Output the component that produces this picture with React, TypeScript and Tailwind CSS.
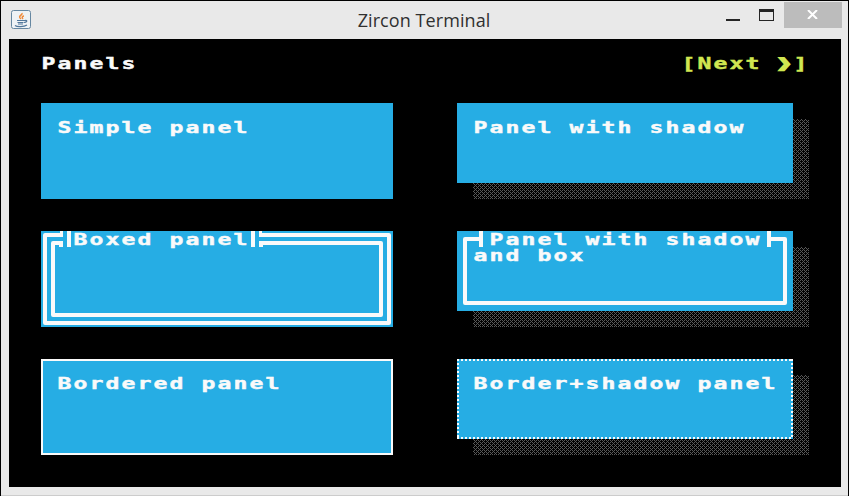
import React from "react";

function Text({ children, className = "" }: { children: React.ReactNode; className?: string }) {
  return (
    <span
      className={
        "block h-4 w-max origin-left translate-x-[0.4px] translate-y-px scale-x-[1.4] whitespace-pre font-['DejaVu_Sans_Mono',monospace] text-[16.5px] font-bold leading-4 tracking-[1.495px] [-webkit-text-stroke:0.45px_currentColor] " +
        className
      }
    >
      {children}
    </span>
  );
}

function Shadowed({ children }: { children: React.ReactNode }) {
  return (
    <div className="relative h-24 w-[352px]">
      <svg className="absolute left-4 top-4" width="336" height="80" shapeRendering="crispEdges">
        <defs>
          <pattern id="shade" width="4" height="4" patternUnits="userSpaceOnUse">
            <path
              d="M0 0h1v1h-1zM1 1h1v1h-1zM3 1h1v1h-1zM2 2h1v1h-1zM1 3h1v1h-1zM3 3h1v1h-1z"
              fill="#585858"
            />
          </pattern>
        </defs>
        <rect width="336" height="80" fill="url(#shade)" />
      </svg>
      <div className="relative h-20 w-[336px] bg-[#26ade4]">{children}</div>
    </div>
  );
}

function DottedBorder() {
  const h = "absolute left-0 right-0 h-[2px] bg-[repeating-linear-gradient(90deg,#fafafa_0_2px,transparent_2px_4px)]";
  const v = "absolute top-0 bottom-0 w-[2px] bg-[repeating-linear-gradient(180deg,#fafafa_0_2px,transparent_2px_4px)]";
  return (
    <>
      <i className={h + " top-0"} />
      <i className={h + " bottom-0"} />
      <i className={v + " left-0"} />
      <i className={v + " right-0"} />
    </>
  );
}

export default function App() {
  return (
    <div className="flex h-[496px] w-[849px] flex-col overflow-hidden border-l border-t border-r border-black bg-[#e9e9e9] pl-2 pr-[7px] text-[#fafafa]">
      <header className="relative flex h-[38px] shrink-0 items-start">
        <svg className="ml-[2px] mt-[9px]" width="20" height="19" viewBox="0 0 20 19" fill="none">
          <rect x=".5" y=".5" width="19" height="18" rx="2" fill="#eef2f5" stroke="#6687a1" />
          <path d="M10 9C6 6 12 5 11 3M12 9c-2-2 0-3 1-3" stroke="#ef8b3b" strokeWidth="1.5" />
          <path d="M6 10.5h8c3-.5 2 2-1 2M6.500 12.500h6M7 14h5M4 15.500c2 1.500 9 1.500 12-.5" stroke="#51779b" strokeWidth="1.200" />
        </svg>
        <h1 className="absolute left-0 top-[7px] w-full pr-[2px] text-center font-['Open_Sans',sans-serif] text-[18px] leading-6 tracking-[0.08px] text-[#303030]">
          Zircon Terminal
        </h1>
        <div className="ml-auto flex">
          <i className="mr-[19px] mt-[18px] h-[2px] w-[14px] bg-[#252525]" />
          <i className="mr-[10px] mt-2 h-3 w-[15px] border border-t-[3px] border-[#252525]" />
          <div className="-mr-[1px] mt-px flex h-[26px] w-[58px] justify-center bg-[#bcbcbc] pt-[9px]">
            <svg width="11" height="9" viewBox="0 0 11 9" className="-ml-[1px] -mt-[1px]">
              <path d="M1 0l9 9M10 0L1 9" stroke="#fff" strokeWidth="2" />
            </svg>
          </div>
        </div>
      </header>
      <main className="h-[448px] w-[832px] shrink-0 bg-black px-8 pt-4">
        <div className="flex h-12 justify-between">
          <Text>Panels</Text>
          <div className="w-32 text-[#d1e751]">
            <Text>
              [Next <span className="[-webkit-text-stroke:2px_currentColor]">❯</span>]
            </Text>
          </div>
        </div>
        <div className="grid grid-cols-[352px_352px] gap-x-16 gap-y-8">
          <section className="h-24 bg-[#26ade4] pl-4 pt-4">
            <Text>Simple panel</Text>
          </section>
          <Shadowed>
            <div className="pl-4 pt-4"><Text>Panel with shadow</Text></div>
          </Shadowed>
          <section className="relative h-24 bg-[#26ade4]">
            <i className="absolute inset-[2px] rounded-[2px] border-4 border-[#fafafa]" />
            <i className="absolute inset-[10px] rounded-[2px] border-4 border-[#fafafa]" />
            <i className="absolute left-[19px] top-0 h-[3px] w-[3px] bg-[#fafafa]" />
            <i className="absolute left-[18px] top-[13px] h-[3px] w-1 bg-[#fafafa]" />
            <i className="absolute left-[218px] top-0 h-[3px] w-[3px] bg-[#fafafa]" />
            <i className="absolute left-[218px] top-[13px] h-[3px] w-1 bg-[#fafafa]" />
            <div className="absolute left-[22px] top-0 h-4 w-[196px] bg-[#26ade4] px-1">
              <div className="h-4 border-x-4 border-[#fafafa] pl-[2px]"><Text>Boxed panel</Text></div>
            </div>
          </section>
          <Shadowed>
            <i className="absolute inset-[6px] rounded-[2px] border-4 border-[#fafafa]" />
            <div className="absolute left-[22px] top-0 h-4 w-[292px] border-x-4 border-[#fafafa] bg-[#26ade4] pl-[6px]">
              <Text>Panel with shadow</Text>
            </div>
            <div className="relative pl-4 pt-4"><Text>and box</Text></div>
          </Shadowed>
          <section className="h-24 border-2 border-[#fafafa] bg-[#26ade4] pl-[14px] pt-[14px]">
            <Text>Bordered panel</Text>
          </section>
          <Shadowed>
            <DottedBorder />
            <div className="pl-4 pt-4"><Text>Border+shadow panel</Text></div>
          </Shadowed>
        </div>
      </main>
      <i className="-mx-2 mt-auto h-px shrink-0 bg-[#ccc]" />
    </div>
  );
}
